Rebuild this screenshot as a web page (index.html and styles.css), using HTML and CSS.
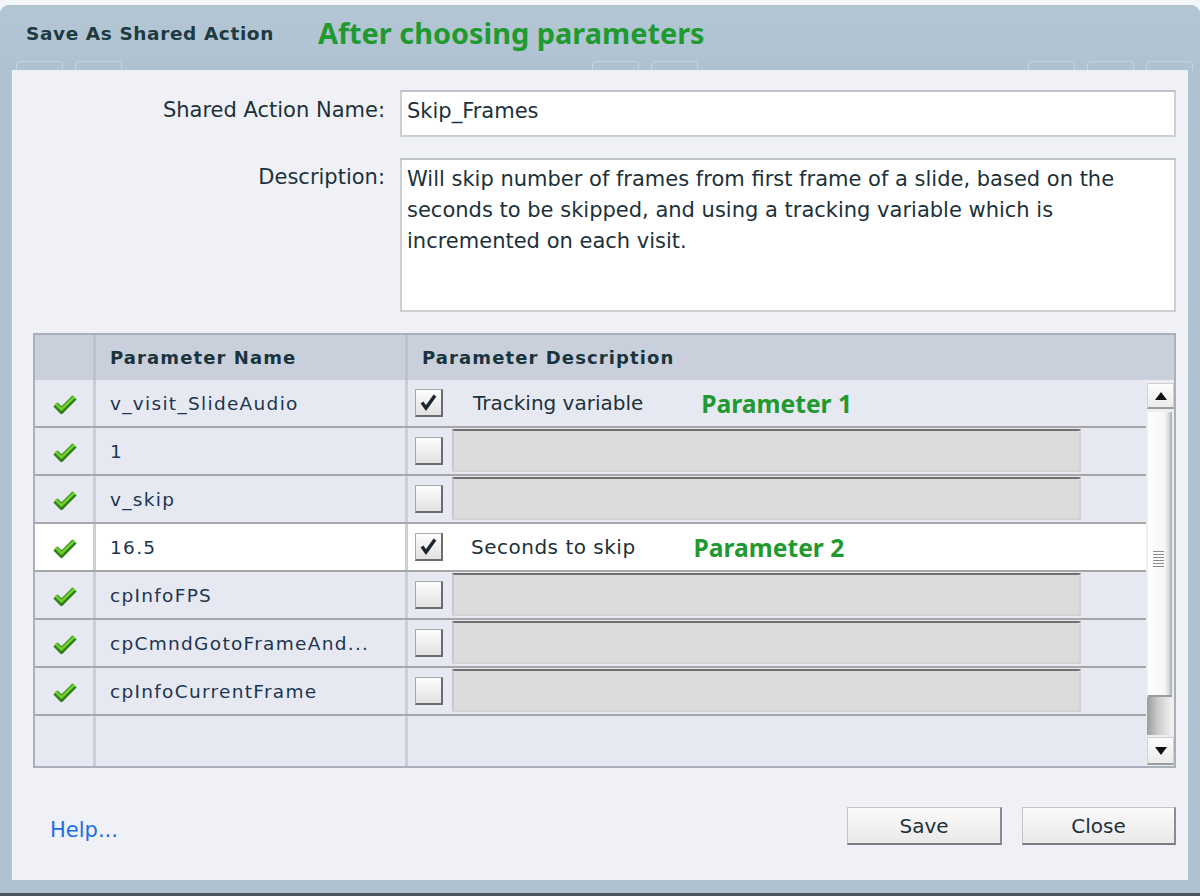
FILE: index.html
```html
<!DOCTYPE html>
<html>
<head>
<meta charset="utf-8">
<title>Save As Shared Action</title>
<link rel="stylesheet" href="styles.css">
</head>
<body>
<div class="window">
  <div class="titlebar">
    <span class="title">Save As Shared Action</span>
    <span class="note">After choosing parameters</span>
  </div>
  <div class="ghosts">
    <span class="ghost g1"></span><span class="ghost"></span>
    <span class="ghost g2"></span><span class="ghost"></span>
    <span class="ghost g3"></span><span class="ghost"></span><span class="ghost"></span>
  </div>
  <div class="panel">
    <div class="form">
      <div class="label label-name">Shared Action Name:</div>
      <div class="field name-field">Skip_Frames</div>
      <div class="label label-desc">Description:</div>
      <div class="field desc-field">Will skip number of frames from first frame of a slide, based on the seconds to be skipped, and using a tracking variable which is incremented on each visit.</div>
    </div>

    <div class="table">
      <div class="thead">
        <div class="th th-icon"></div>
        <div class="th th-name">Parameter Name</div>
        <div class="th th-desc">Parameter Description</div>
      </div>
      <div class="tbody">
        <div class="rows">
          <div class="row">
            <div class="cell cell-icon"><svg class="ok" width="24" height="20" viewBox="0 0 24 20"><path d="M2.5 10.5 L8.5 16.5 L21.5 3.5" fill="none" stroke="#2f7f14" stroke-width="6"/><path d="M2.5 9.5 L8.5 15.5 L21.5 2.5" fill="none" stroke="#6fd22c" stroke-width="2.6"/></svg></div>
            <div class="cell cell-name">v_visit_SlideAudio</div>
            <div class="cell cell-desc"><span class="checkbox"><svg width="25" height="25" viewBox="0 0 25 25"><path d="M6 12.5 L10 18 L19 5.5" fill="none" stroke="#1b2531" stroke-width="3.4"/></svg></span><span class="desc-text">Tracking variable</span><span class="annot">Parameter 1</span></div>
          </div>
          <div class="row">
            <div class="cell cell-icon"><svg class="ok" width="24" height="20" viewBox="0 0 24 20"><path d="M2.5 10.5 L8.5 16.5 L21.5 3.5" fill="none" stroke="#2f7f14" stroke-width="6"/><path d="M2.5 9.5 L8.5 15.5 L21.5 2.5" fill="none" stroke="#6fd22c" stroke-width="2.6"/></svg></div>
            <div class="cell cell-name">1</div>
            <div class="cell cell-desc"><span class="checkbox"></span><span class="gray-input"></span></div>
          </div>
          <div class="row">
            <div class="cell cell-icon"><svg class="ok" width="24" height="20" viewBox="0 0 24 20"><path d="M2.5 10.5 L8.5 16.5 L21.5 3.5" fill="none" stroke="#2f7f14" stroke-width="6"/><path d="M2.5 9.5 L8.5 15.5 L21.5 2.5" fill="none" stroke="#6fd22c" stroke-width="2.6"/></svg></div>
            <div class="cell cell-name">v_skip</div>
            <div class="cell cell-desc"><span class="checkbox"></span><span class="gray-input"></span></div>
          </div>
          <div class="row selected">
            <div class="cell cell-icon"><svg class="ok" width="24" height="20" viewBox="0 0 24 20"><path d="M2.5 10.5 L8.5 16.5 L21.5 3.5" fill="none" stroke="#2f7f14" stroke-width="6"/><path d="M2.5 9.5 L8.5 15.5 L21.5 2.5" fill="none" stroke="#6fd22c" stroke-width="2.6"/></svg></div>
            <div class="cell cell-name">16.5</div>
            <div class="cell cell-desc"><span class="checkbox"><svg width="25" height="25" viewBox="0 0 25 25"><path d="M6 12.5 L10 18 L19 5.5" fill="none" stroke="#1b2531" stroke-width="3.4"/></svg></span><span class="desc-text desc-text2">Seconds to skip</span><span class="annot">Parameter 2</span></div>
          </div>
          <div class="row">
            <div class="cell cell-icon"><svg class="ok" width="24" height="20" viewBox="0 0 24 20"><path d="M2.5 10.5 L8.5 16.5 L21.5 3.5" fill="none" stroke="#2f7f14" stroke-width="6"/><path d="M2.5 9.5 L8.5 15.5 L21.5 2.5" fill="none" stroke="#6fd22c" stroke-width="2.6"/></svg></div>
            <div class="cell cell-name">cpInfoFPS</div>
            <div class="cell cell-desc"><span class="checkbox"></span><span class="gray-input"></span></div>
          </div>
          <div class="row">
            <div class="cell cell-icon"><svg class="ok" width="24" height="20" viewBox="0 0 24 20"><path d="M2.5 10.5 L8.5 16.5 L21.5 3.5" fill="none" stroke="#2f7f14" stroke-width="6"/><path d="M2.5 9.5 L8.5 15.5 L21.5 2.5" fill="none" stroke="#6fd22c" stroke-width="2.6"/></svg></div>
            <div class="cell cell-name">cpCmndGotoFrameAnd...</div>
            <div class="cell cell-desc"><span class="checkbox"></span><span class="gray-input"></span></div>
          </div>
          <div class="row">
            <div class="cell cell-icon"><svg class="ok" width="24" height="20" viewBox="0 0 24 20"><path d="M2.5 10.5 L8.5 16.5 L21.5 3.5" fill="none" stroke="#2f7f14" stroke-width="6"/><path d="M2.5 9.5 L8.5 15.5 L21.5 2.5" fill="none" stroke="#6fd22c" stroke-width="2.6"/></svg></div>
            <div class="cell cell-name">cpInfoCurrentFrame</div>
            <div class="cell cell-desc"><span class="checkbox"></span><span class="gray-input"></span></div>
          </div>
          <div class="row empty">
            <div class="cell cell-icon"></div>
            <div class="cell cell-name"></div>
            <div class="cell cell-desc"></div>
          </div>
        </div>
        <div class="scrollbar">
          <div class="sb-btn sb-up"><svg width="12" height="8" viewBox="0 0 12 8"><path d="M6 0 L12 8 L0 8 Z" fill="#111"/></svg></div>
          <div class="sb-thumb"><span class="grip"></span></div>
          <div class="sb-track"></div>
          <div class="sb-btn sb-down"><svg width="12" height="8" viewBox="0 0 12 8"><path d="M0 0 L12 0 L6 8 Z" fill="#111"/></svg></div>
        </div>
      </div>
    </div>

    <div class="footer">
      <a class="help">Help...</a>
      <div class="buttons">
        <button class="btn btn-save">Save</button>
        <button class="btn btn-close">Close</button>
      </div>
    </div>
  </div>
  <div class="frame-bottom"></div>
  <div class="bottom-line"></div>
</div>
</body>
</html>
```

FILE: styles.css
```css
html, body {
  margin: 0;
  padding: 0;
}
body {
  background: #f4f6f9;
  width: 1200px;
  height: 896px;
  overflow: hidden;
  font-family: "DejaVu Sans", "Liberation Sans", sans-serif;
}
.window {
  margin-top: 5px;
  height: 891px;
  background: #afc2d1;
  border-radius: 9px 9px 0 0;
  display: flex;
  flex-direction: column;
  overflow: hidden;
}
.titlebar {
  height: 56px;
  display: flex;
  align-items: center;
  padding-left: 26px;
  flex: none;
  background: linear-gradient(#b4c6d4, #b0c3d2);
}
.title {
  font-family: "DejaVu Sans", sans-serif;
  font-weight: bold;
  font-size: 18.5px;
  letter-spacing: 0.6px;
  color: #1e3a42;
}
.note {
  margin-left: 44px;
  font-family: "Noto Sans", "Open Sans", sans-serif;
  font-weight: bold;
  font-size: 28.9px;
  color: #1f9a30;
  line-height: 1;
}
.ghosts {
  height: 9px;
  flex: none;
  display: flex;
  align-items: flex-end;
  padding-left: 16px;
  gap: 12px;
}
.ghost {
  width: 45px;
  height: 8px;
  border: 1px solid rgba(220, 230, 238, 0.45);
  border-bottom: none;
  border-radius: 4px 4px 0 0;
}
.g2 { margin-left: 458px; }
.g3 { margin-left: 318px; }

.panel {
  margin: 0 12px;
  height: 810px;
  flex: none;
  background: #eff1f6;
  box-sizing: border-box;
  box-shadow: inset 1px 0 0 #f8f9fb;
}
.form {
  display: grid;
  grid-template-columns: 373px 776px;
  column-gap: 15px;
  row-gap: 21px;
  padding-top: 20px;
}
.label {
  text-align: right;
  font-size: 21px;
  color: #1c3139;
}
.label-name {
  align-self: start;
  line-height: 41px;
}
.label-desc {
  padding-top: 4px;
  line-height: 31px;
}
.field {
  background: #fff;
  box-sizing: border-box;
  border: 2px solid #cbced3;
  border-top-color: #bfc2c7;
  font-size: 21px;
  color: #1c3139;
}
.name-field {
  height: 47px;
  line-height: 39px;
  padding-left: 5px;
}
.desc-field {
  height: 154px;
  padding: 4px 6px 0 5px;
  line-height: 31px;
}

.table {
  margin: 21px 0 0 21px;
  width: 1143px;
  height: 435px;
  box-sizing: border-box;
  border: 2px solid #a9b0bb;
  display: flex;
  flex-direction: column;
  background: #e6e9f1;
}
.thead {
  height: 45px;
  flex: none;
  display: flex;
  background: #c9d0dc;
}
.th {
  font-weight: bold;
  font-size: 18px;
  letter-spacing: 1.1px;
  color: #1a343e;
  line-height: 45px;
}
.th-icon {
  width: 58px;
  border-right: 3px solid #bcc3ce;
}
.th-name {
  width: 295px;
  padding-left: 14px;
  border-right: 3px solid #bcc3ce;
}
.th-desc {
  flex: 1;
  padding-left: 14px;
}
.tbody {
  flex: 1;
  display: flex;
}
.rows {
  flex: 1;
  display: flex;
  flex-direction: column;
}
.row {
  height: 48px;
  box-sizing: border-box;
  border-bottom: 2px solid #a7a7a7;
  display: flex;
  background: #e6e9f1;
}
.row.selected {
  background: #ffffff;
}
.row.empty {
  height: 50px;
  border-bottom: none;
}
.cell {
  display: flex;
  align-items: center;
}
.cell-icon {
  width: 58px;
  justify-content: center;
  border-right: 3px solid #cbcfd6;
}
.ok {
  margin-left: 2px;
  margin-top: 2px;
}
.cell-name {
  width: 295px;
  padding-left: 14px;
  border-right: 3px solid #cbcfd6;
  font-size: 18.5px;
  letter-spacing: 1.3px;
  color: #1c3550;
  white-space: nowrap;
}
.cell-desc {
  flex: 1;
  padding-left: 7px;
}
.checkbox {
  width: 28px;
  height: 28px;
  box-sizing: border-box;
  border: 1px solid #a8a8a8;
  border-right: 2px solid #6c6c6c;
  border-bottom: 2px solid #6c6c6c;
  background: linear-gradient(#fdfdfd, #e2e2e2);
  display: flex;
  align-items: center;
  justify-content: center;
  flex: none;
}
.desc-text {
  margin-left: 30px;
  font-size: 20px;
  color: #1c3139;
}
.desc-text2 {
  margin-left: 28px;
  letter-spacing: 0.5px;
}
.annot {
  margin-left: 58px;
  font-family: "Noto Sans", "Open Sans", sans-serif;
  font-weight: bold;
  font-size: 24.6px;
  color: #1f9a30;
}
.gray-input {
  margin-left: 9px;
  align-self: flex-start;
  margin-top: 1px;
  width: 629px;
  height: 43px;
  box-sizing: border-box;
  background: #dcdcdc;
  border-top: 2px solid #6f6f6f;
  border-left: 2px solid #c9c9c9;
  border-right: 2px solid #d3d3d3;
  border-bottom: 2px solid #d3d3d3;
}

.scrollbar {
  width: 28px;
  flex: none;
  background: #eceef1;
  display: flex;
  flex-direction: column;
  padding-top: 3px;
  box-sizing: border-box;
}
.sb-btn {
  width: 27px;
  margin-left: 1px;
  box-sizing: border-box;
  background: linear-gradient(#fcfcfc, #ebebeb);
  border: 1px solid #cfcfcf;
  border-bottom: 2px solid #9c9c9c;
  display: flex;
  align-items: center;
  justify-content: center;
}
.sb-up {
  height: 26px;
}
.sb-down {
  height: 28px;
  margin-top: 2px;
}
.sb-thumb {
  margin-top: 3px;
  margin-left: 2px;
  width: 24px;
  height: 285px;
  box-sizing: border-box;
  background: linear-gradient(to right, #ffffff, #f6f6f6 70%, #dcdcdc 85%, #a9a9a9);
  border-bottom: 2px solid #9c9c9c;
  display: flex;
  align-items: center;
  justify-content: center;
}
.grip {
  width: 11px;
  height: 17px;
  margin-top: 12px;
  margin-right: 3px;
  background: repeating-linear-gradient(#8a8a8a 0 1px, transparent 1px 3px);
}
.sb-track {
  margin-left: 1px;
  width: 26px;
  height: 38px;
  background: linear-gradient(to right, #9c9c9c, #c9c9c9 40%, #e6e6e6 80%, #f2f2f2);
}

.footer {
  margin-top: 39px;
  display: flex;
  align-items: center;
  justify-content: space-between;
  padding: 0 12px 0 38px;
}
.help {
  font-size: 21px;
  color: #1a6ee6;
  margin-top: 8px;
  cursor: pointer;
}
.buttons {
  display: flex;
  gap: 20px;
}
.btn {
  width: 155px;
  height: 38px;
  box-sizing: border-box;
  font-family: "DejaVu Sans", sans-serif;
  font-size: 20px;
  color: #1c3139;
  background: linear-gradient(#fbfbfb, #e9e9e9);
  border: 1px solid #c4c4c4;
  border-right: 2px solid #8c8c8c;
  border-bottom: 2px solid #7c7c7c;
  padding: 0;
}
.btn-close {
  width: 154px;
}
.frame-bottom {
  height: 13px;
  flex: none;
}
.bottom-line {
  height: 3px;
  flex: none;
  background: #4f5459;
}
```
